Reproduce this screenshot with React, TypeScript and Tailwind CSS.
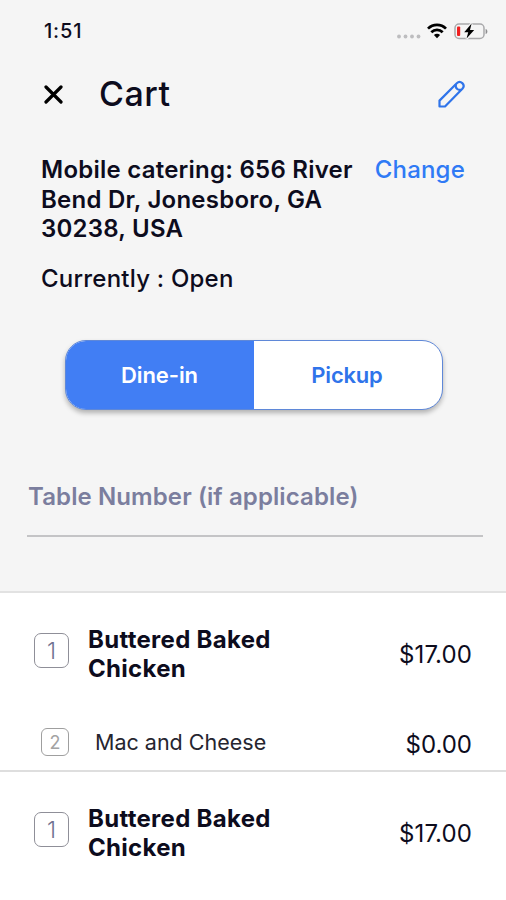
type CartLine = { qty: number; name: string; price: string; extras: { qty: number; name: string; price: string }[] }

const LINES: CartLine[] = [
  { qty: 1, name: 'Buttered Baked Chicken', price: '$17.00', extras: [{ qty: 2, name: 'Mac and Cheese', price: '$0.00' }] },
  { qty: 1, name: 'Buttered Baked Chicken', price: '$17.00', extras: [] },
]

function StatusBar() {
  return (
    <div className="flex h-[62px] items-center justify-between pl-[44px] pr-[18px] text-[20px] font-medium tracking-[0.8px]">
      <span>1:51</span>
      <div className="flex items-center">
        <svg width="24" height="5" viewBox="0 0 24 5" className="mr-[6px] mt-[10px]" fill="#bdbdbf">
          <circle cx="2" cy="2.5" r="1.9" />
          <circle cx="8.5" cy="2.5" r="1.9" />
          <circle cx="15" cy="2.5" r="1.9" />
          <circle cx="21.5" cy="2.5" r="1.9" />
        </svg>
        <svg width="20" height="16" viewBox="0 0 20 16" className="mr-[7px]" fill="none" stroke="#000" strokeWidth="2.7">
          <path d="M1 5.6C6 .6 14 .6 19 5.6" />
          <path d="M4.3 9.2C7.5 6 12.5 6 15.7 9.2" />
          <path d="M10 15.2L6.9 12C8.7 10.3 11.3 10.3 13.1 12Z" fill="#000" stroke="none" />
        </svg>
        <svg width="34" height="17" viewBox="0 0 34 17" fill="none">
          <rect x="1" y="1" width="29" height="14.5" rx="4" stroke="#a9a9ab" strokeWidth="1.5" />
          <path d="M31.6 6v5c1.2-.3 1.8-1.3 1.8-2.5S32.8 6.3 31.6 6Z" fill="#8e8e90" />
          <rect x="3" y="3.5" width="3.2" height="9.5" rx="1" fill="#f02020" />
          <path d="M17.6 .6L10.2 9.2H14.2L12.6 15.6L20.2 7.1H16Z" fill="#000" stroke="#f5f5f5" strokeWidth="2.4" paintOrder="stroke" />
        </svg>
      </div>
    </div>
  )
}

function Header() {
  return (
    <header className="flex h-16 items-center pl-[44px] pr-[40px]">
      <svg width="19" height="19" viewBox="0 0 19 19" fill="none" stroke="#000" strokeWidth="3.2" strokeLinecap="round">
        <path d="M2 2L17 17M17 2L2 17" />
      </svg>
      <h1 className="ml-[36px] flex-1 text-[34px] font-medium leading-[40px] tracking-[0.5px]">Cart</h1>
      <svg width="29" height="29" viewBox="0 0 29 29" fill="none" stroke="#2f74ea" strokeWidth="2.2" strokeLinejoin="round">
        <path d="M2.5 26.5V20.6L19.8 3.3C21.5 1.6 23.6 1.6 25.3 3.1C27 4.8 27 7 25.4 8.8L8 26.5Z" />
        <path d="M18.9 4.3C17.9 8 20.8 10.8 24.5 9.7" />
      </svg>
    </header>
  )
}

function Line({ line }: { line: CartLine }) {
  return (
    <li className="border-b-2 border-[#dedede] last:border-0">
      <div className="flex h-[121px] items-center px-[34px]">
        <span className="mt-[-6px] flex h-[35px] w-[35px] items-center justify-center rounded-[7px] border-[1.5px] border-[#8f8f98] pt-px text-[23px] font-light text-[#6f7190]">{line.qty}</span>
        <p className="ml-[19px] mt-px w-[220px] text-[24px] font-bold leading-[29.5px] tracking-[0.3px]">{line.name}</p>
        <span className="ml-auto mt-[2px] text-[24px] tracking-[0.1px]">{line.price}</span>
      </div>
      {line.extras.map((x) => (
        <div key={x.name} className="flex h-[56px] items-center pl-[41px] pr-[34px]">
          <span className="flex h-7 w-7 items-center justify-center rounded-[6px] border-[1.5px] border-[#9f9f9f] text-[18px] text-[#a3a3a3]">{x.qty}</span>
          <p className="ml-[26px] text-[21.5px] text-[#26252f]">{x.name}</p>
          <span className="ml-auto mt-[5px] text-[24px]">{x.price}</span>
        </div>
      ))}
    </li>
  )
}

export default function App() {
  return (
    <div className="h-[900px] w-[506px] overflow-hidden bg-white font-['Inter',sans-serif] text-[#0d0c1d]">
      <section className="h-[593px] border-b-2 border-[#e2e2e2] bg-[#f5f5f5]">
        <StatusBar />
        <Header />
        <div className="mt-[29px] flex items-start justify-between px-[41px] text-[24px] leading-[29.5px]">
          <p className="w-[320px] font-semibold tracking-[0.24px]">Mobile catering: 656 River Bend Dr, Jonesboro, GA 30238, USA</p>
          <button className="font-medium tracking-[0.2px] text-[#2f7af5]">Change</button>
        </div>
        <p className="mt-[20px] pl-[41px] text-[24px] font-medium leading-[30px] tracking-[0.22px]">Currently : Open</p>
        <div className="ml-[65px] mt-[46px] flex h-[70px] w-[378px] overflow-hidden rounded-[21px] border border-[#5f88d8] bg-white text-[22px] shadow-[0_3px_5px_rgba(0,0,0,0.28)]">
          <button className="w-[188px] bg-[#417ef4] pr-px pt-[2px] font-semibold tracking-[-0.1px] text-white">Dine-in</button>
          <button className="flex-1 pr-[2px] pt-[2px] font-semibold tracking-[-0.2px] text-[#2f74ea]">Pickup</button>
        </div>
        <div className="ml-[27px] mr-[23px] mt-[71px] border-b-2 border-[#c4c4c6] pb-[22px] pl-px">
          <p className="text-[24px] font-semibold leading-[32px] tracking-[0.1px] text-[#7b7e9e]">Table Number (if applicable)</p>
        </div>
      </section>
      <ul>
        {LINES.map((line, i) => (
          <Line key={i} line={line} />
        ))}
      </ul>
    </div>
  )
}
